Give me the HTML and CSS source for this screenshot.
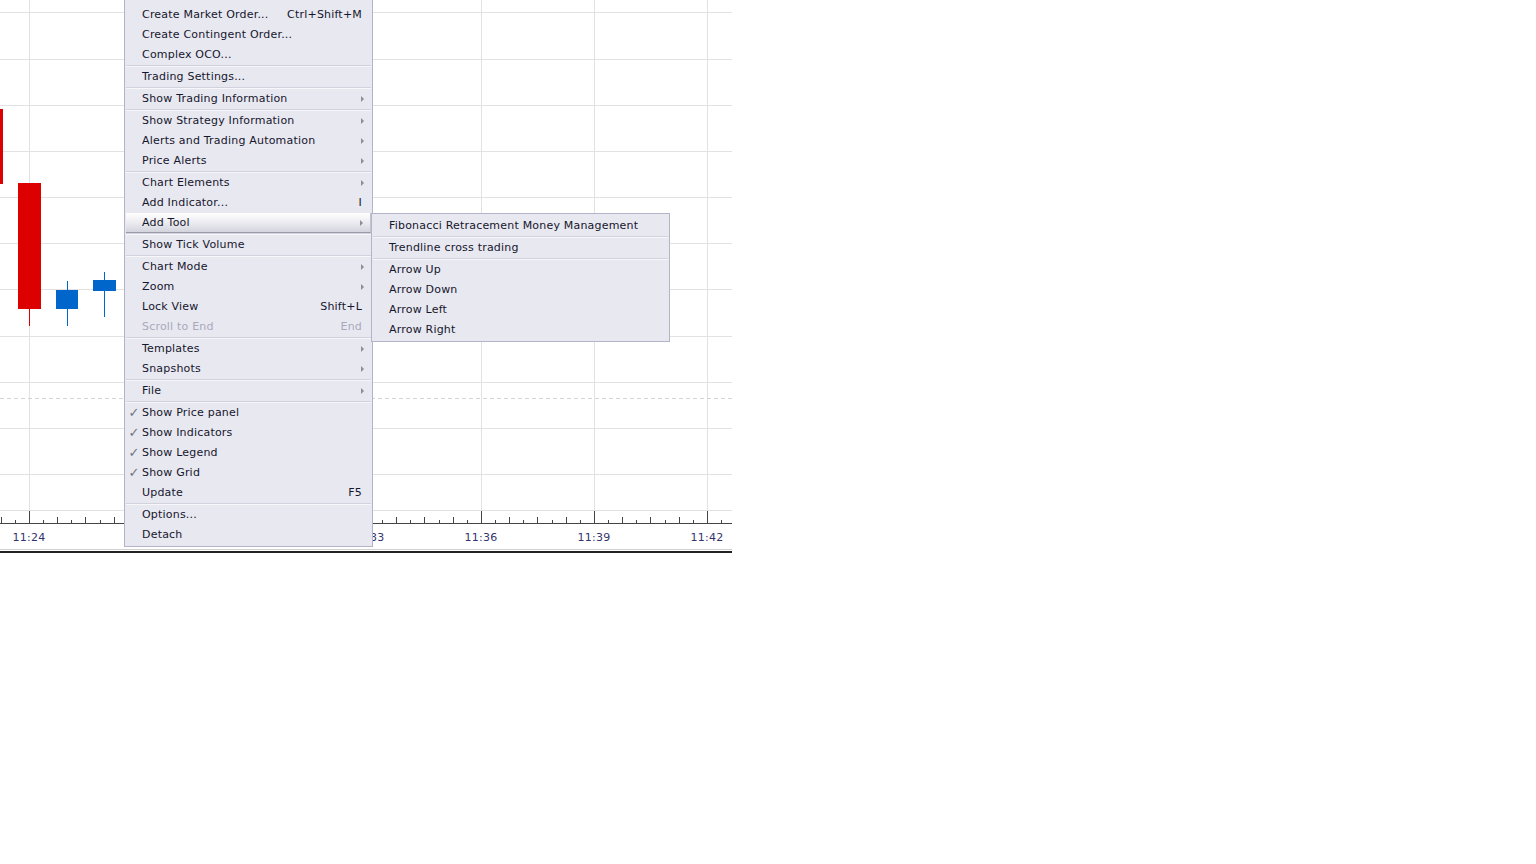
FILE: index.html
```html
<!DOCTYPE html>
<html lang="en">
<head>
    <meta charset="UTF-8">
    <title>Chart Context Menu</title>
    <link rel="stylesheet" href="styles.css">
</head>
<body>
    <div class="chart">
        <svg class="plot" width="732" height="554" viewBox="0 0 732 554">
            <defs>
                <pattern id="ticks" x="29" y="510" width="113" height="13" patternUnits="userSpaceOnUse">
                    <rect x="0" y="1" width="1" height="12" fill="#444"/>
                    <rect x="14" y="10" width="1" height="3" fill="#444"/>
                    <rect x="28" y="7" width="1" height="6" fill="#444"/>
                    <rect x="42" y="10" width="1" height="3" fill="#444"/>
                    <rect x="56" y="7" width="1" height="6" fill="#444"/>
                    <rect x="71" y="10" width="1" height="3" fill="#444"/>
                    <rect x="85" y="7" width="1" height="6" fill="#444"/>
                    <rect x="99" y="10" width="1" height="3" fill="#444"/>
                </pattern>
            </defs>

            <!-- horizontal grid -->
            <g fill="#e2e2e2">
                <rect x="0" y="12" width="732" height="1"/>
                <rect x="0" y="59" width="732" height="1"/>
                <rect x="0" y="105" width="732" height="1"/>
                <rect x="0" y="151" width="732" height="1"/>
                <rect x="0" y="197" width="732" height="1"/>
                <rect x="0" y="243" width="732" height="1"/>
                <rect x="0" y="289" width="732" height="1"/>
                <rect x="0" y="336" width="732" height="1"/>
                <rect x="0" y="382" width="732" height="1"/>
                <rect x="0" y="428" width="732" height="1"/>
                <rect x="0" y="474" width="732" height="1"/>
                <rect x="0" y="510" width="732" height="1"/>
            </g>
            <!-- vertical grid -->
            <g fill="#e2e2e2">
                <rect x="29" y="0" width="1" height="510"/>
                <rect x="142" y="0" width="1" height="510"/>
                <rect x="255" y="0" width="1" height="510"/>
                <rect x="368" y="0" width="1" height="510"/>
                <rect x="481" y="0" width="1" height="510"/>
                <rect x="594" y="0" width="1" height="510"/>
                <rect x="707" y="0" width="1" height="510"/>
            </g>
            <line x1="0" y1="398.5" x2="732" y2="398.5" stroke="#d4d4d4" stroke-dasharray="4 3"/>

            <!-- candles -->
            <rect x="0" y="109" width="3" height="75" fill="#dd0000"/>
            <rect x="29" y="309" width="1" height="17" fill="#dd0000"/>
            <rect x="18" y="183" width="23" height="126" fill="#dd0000"/>
            <rect x="67" y="281" width="1" height="45" fill="#0066cc"/>
            <rect x="56" y="290" width="22" height="19" fill="#0066cc"/>
            <rect x="104" y="272" width="1" height="45" fill="#0066cc"/>
            <rect x="93" y="280" width="23" height="11" fill="#0066cc"/>

            <!-- time axis -->
            <rect x="0" y="510" width="732" height="13" fill="url(#ticks)"/>
            <rect x="0" y="523" width="732" height="1" fill="#444"/>
            <g class="axis-labels">
                <text x="29" y="541">11:24</text>
                <text x="368" y="541">11:33</text>
                <text x="481" y="541">11:36</text>
                <text x="594" y="541">11:39</text>
                <text x="707" y="541">11:42</text>
            </g>
            <rect x="0" y="549" width="732" height="1" fill="#d0d0d0"/>
            <rect x="0" y="551" width="732" height="2" fill="#222"/>
        </svg>

        <div class="menu main-menu">
            <div class="item"><span class="check"></span><span class="label">Create Stop Order...</span></div>
            <div class="item"><span class="check"></span><span class="label">Create Market Order...</span><span class="key">Ctrl+Shift+M</span></div>
            <div class="item"><span class="check"></span><span class="label">Create Contingent Order...</span></div>
            <div class="item"><span class="check"></span><span class="label">Complex OCO...</span></div>
            <div class="sep"></div>
            <div class="item"><span class="check"></span><span class="label">Trading Settings...</span></div>
            <div class="sep"></div>
            <div class="item"><span class="check"></span><span class="label">Show Trading Information</span><span class="arrow"></span></div>
            <div class="sep"></div>
            <div class="item"><span class="check"></span><span class="label">Show Strategy Information</span><span class="arrow"></span></div>
            <div class="item"><span class="check"></span><span class="label">Alerts and Trading Automation</span><span class="arrow"></span></div>
            <div class="item"><span class="check"></span><span class="label">Price Alerts</span><span class="arrow"></span></div>
            <div class="sep"></div>
            <div class="item"><span class="check"></span><span class="label">Chart Elements</span><span class="arrow"></span></div>
            <div class="item"><span class="check"></span><span class="label">Add Indicator...</span><span class="key">I</span></div>
            <div class="item active"><span class="check"></span><span class="label">Add Tool</span><span class="arrow"></span></div>
            <div class="sep"></div>
            <div class="item"><span class="check"></span><span class="label">Show Tick Volume</span></div>
            <div class="sep"></div>
            <div class="item"><span class="check"></span><span class="label">Chart Mode</span><span class="arrow"></span></div>
            <div class="item"><span class="check"></span><span class="label">Zoom</span><span class="arrow"></span></div>
            <div class="item"><span class="check"></span><span class="label">Lock View</span><span class="key">Shift+L</span></div>
            <div class="item disabled"><span class="check"></span><span class="label">Scroll to End</span><span class="key">End</span></div>
            <div class="sep"></div>
            <div class="item"><span class="check"></span><span class="label">Templates</span><span class="arrow"></span></div>
            <div class="item"><span class="check"></span><span class="label">Snapshots</span><span class="arrow"></span></div>
            <div class="sep"></div>
            <div class="item"><span class="check"></span><span class="label">File</span><span class="arrow"></span></div>
            <div class="sep"></div>
            <div class="item"><span class="check">✓</span><span class="label">Show Price panel</span></div>
            <div class="item"><span class="check">✓</span><span class="label">Show Indicators</span></div>
            <div class="item"><span class="check">✓</span><span class="label">Show Legend</span></div>
            <div class="item"><span class="check">✓</span><span class="label">Show Grid</span></div>
            <div class="item"><span class="check"></span><span class="label">Update</span><span class="key">F5</span></div>
            <div class="sep"></div>
            <div class="item"><span class="check"></span><span class="label">Options...</span></div>
            <div class="item"><span class="check"></span><span class="label">Detach</span></div>
        </div>

        <div class="menu sub-menu">
            <div class="item"><span class="check"></span><span class="label">Fibonacci Retracement Money Management</span></div>
            <div class="sep"></div>
            <div class="item"><span class="check"></span><span class="label">Trendline cross trading</span></div>
            <div class="sep"></div>
            <div class="item"><span class="check"></span><span class="label">Arrow Up</span></div>
            <div class="item"><span class="check"></span><span class="label">Arrow Down</span></div>
            <div class="item"><span class="check"></span><span class="label">Arrow Left</span></div>
            <div class="item"><span class="check"></span><span class="label">Arrow Right</span></div>
        </div>
    </div>
</body>
</html>
```

FILE: styles.css
```css
body {
    margin: 0;
    background: #fff;
    font-family: "DejaVu Sans", Verdana, sans-serif;
    font-size: 11px;
}
.chart {
    position: relative;
    width: 732px;
    height: 554px;
    overflow: visible;
}
.plot {
    display: block;
}
.axis-labels text {
    font-family: "DejaVu Sans", Verdana, sans-serif;
    font-size: 11px;
    letter-spacing: 0.3px;
    fill: #34346e;
    text-anchor: middle;
}
.menu {
    position: absolute;
    background: #e8e8f1;
    border: 1px solid #b4b4c8;
    color: #16162c;
    box-sizing: border-box;
    letter-spacing: 0.2px;
}
.main-menu {
    left: 124px;
    top: -18px;
    width: 249px;
    padding: 2px 0 1px;
}
.sub-menu {
    left: 371px;
    top: 213px;
    width: 299px;
    padding: 2px 0 1px;
}
.item {
    display: flex;
    align-items: center;
    height: 20px;
    line-height: 20px;
    margin: 0 1px;
    padding-right: 9px;
    white-space: nowrap;
    box-sizing: border-box;
}
.check {
    width: 16px;
    flex: none;
    text-align: center;
    color: #72727f;
    font-size: 13px;
    letter-spacing: 0;
}
.label {
    flex: 1;
}
.key {
    text-align: right;
}
.arrow {
    width: 0;
    height: 0;
    border-left: 3px solid #8c8c9c;
    border-top: 3px solid transparent;
    border-bottom: 3px solid transparent;
    margin-right: -2px;
}
.disabled {
    color: #a8a8ba;
}
.active {
    background: linear-gradient(#ffffff, #f0f0f4 40%, #d4d4de);
    border-bottom: 1px solid #9a9aaa;
    border-right: 1px solid #c4c4d0;
    line-height: 19px;
}
.sep {
    height: 1px;
    margin: 0 1px;
    background: #d2d2de;
    border-bottom: 1px solid #f6f6fb;
}
```
